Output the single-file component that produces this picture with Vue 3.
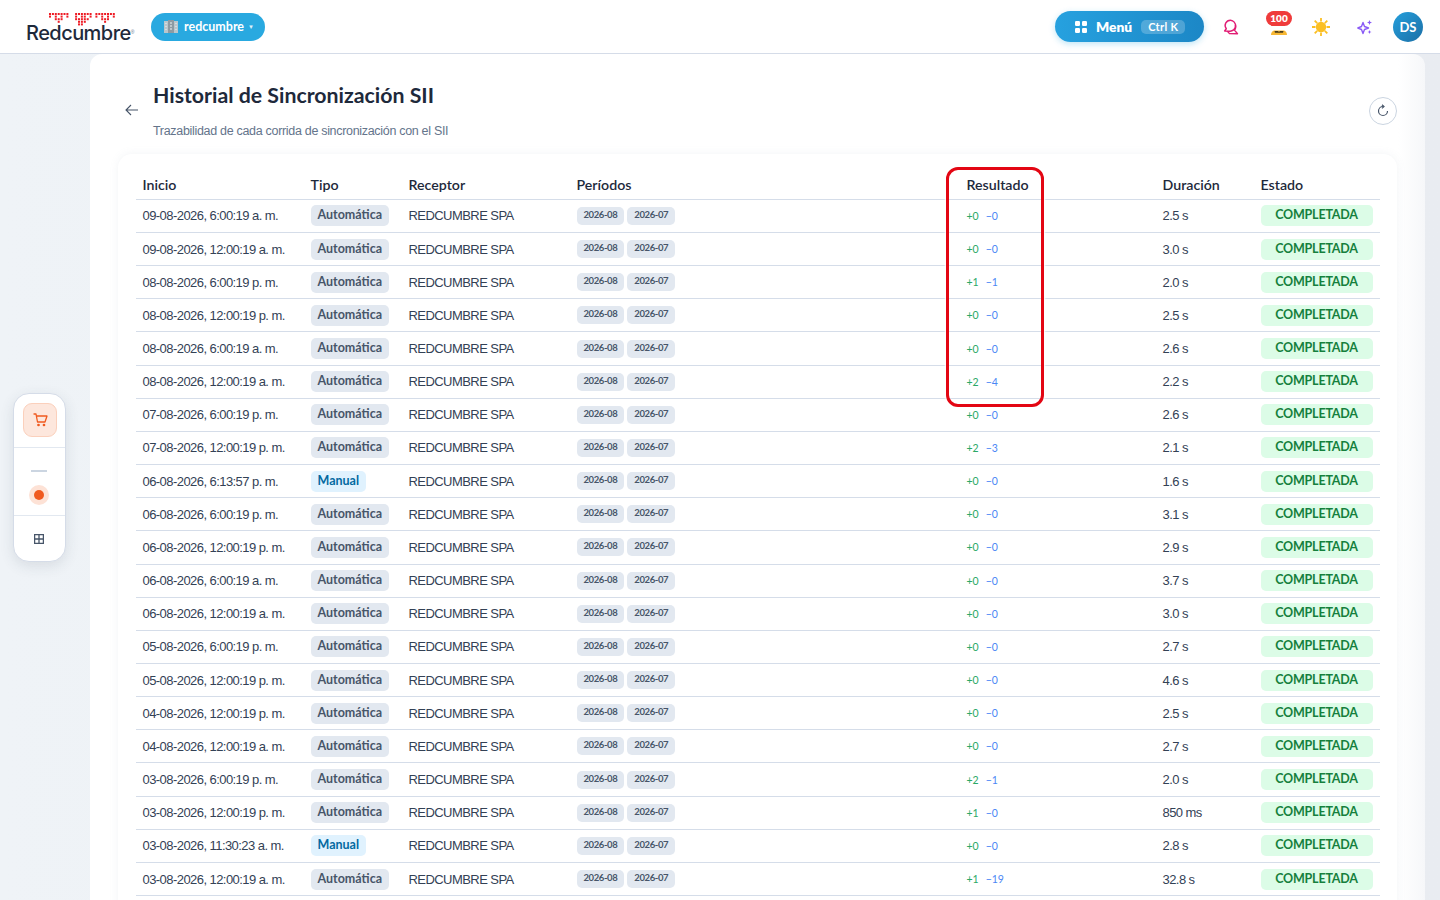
<template>
  <div class="page">
    <header class="topbar">
      <div class="brand">
        <svg class="brand-dots" width="68" height="14" viewBox="0 0 68 14">
          <g fill="#ee1c25">
            <rect v-for="d in logoDots" :key="d.x + '-' + d.y" :x="d.x" :y="d.y" width="2" height="2" />
          </g>
        </svg>
        <span class="brand-name">Redcumbre</span>
        <span class="brand-reg">®</span>
      </div>
      <button class="org">
        <svg width="14" height="13" viewBox="0 0 14 13">
          <rect y="1" width="14" height="12" fill="#b9c6cc" />
          <rect x="4" width="6" height="13" fill="#8d9ba3" />
          <path d="M2 3v1M2 6v1M2 9v1M12 3v1M12 6v1M12 9v1M6 3h2M6 6h2M6 9h2" stroke="#eef3f5" stroke-width="1" />
        </svg>
        <span>redcumbre</span>
        <i class="caret">▼</i>
      </button>
      <div class="top-right">
        <button class="menu">
          <svg width="12" height="12" viewBox="0 0 12 12" fill="#fff">
            <rect width="5" height="5" rx="1.2" />
            <rect x="7" width="5" height="5" rx="1.2" />
            <rect y="7" width="5" height="5" rx="1.2" />
            <rect x="7" y="7" width="5" height="5" rx="1.2" />
          </svg>
          <span class="menu-label">Menú</span>
          <span class="menu-key">Ctrl K</span>
        </button>
        <svg class="top-icon chat" width="16" height="16" viewBox="0 0 16 16" fill="none" stroke="#e11d74" stroke-width="1.400" stroke-linejoin="round">
          <path d="M7.500 1.200a5.300 5.300 0 0 0-4.200 8.600L1.600 12l5 .2a5.300 5.300 0 0 0 .9-11z" />
          <path d="M12.400 5.800c.6 2 .4 3.900-.9 5.300l3 3.700-8-.2-2.100-2.400" />
        </svg>
        <div class="streak">
          <span class="streak-count">100</span>
          <svg width="16" height="6" viewBox="0 0 16 6">
            <path d="M0 6c0-2.500 1.500-4 3-4.500h10c1.500.5 3 2 3 4.500z" fill="#f7b733" />
            <path d="M3.500 2h3.500l1 1 1-1h3.500l-.5 1.800H4z" fill="#4a3c1c" />
          </svg>
        </div>
        <svg class="top-icon sun" width="18" height="18" viewBox="0 0 18 18">
          <circle cx="9" cy="9" r="5.200" fill="#fbbf24" />
          <path d="M9 0v3.500M9 14.500V18M0 9h3.500M14.500 9H18M2.700 2.700l2.500 2.500M12.800 12.800l2.500 2.500M2.700 15.300l2.500-2.500M12.800 5.200l2.500-2.500" stroke="#fbbf24" stroke-width="1.800" />
        </svg>
        <svg class="top-icon spark" width="16" height="16" viewBox="0 0 16 16">
          <path d="M6 3.500l1.500 4L11.500 9l-4 1.500L6 14.500l-1.500-4L.8 9l3.700-1.500z" fill="none" stroke="#8b5cf6" stroke-width="1.400" stroke-linejoin="round" />
          <path d="M12.500 1l.7 1.800 1.800.7-1.800.7-.7 1.800-.7-1.800L10 3.500l1.800-.7zM12.500 11l.6 1.400 1.400.6-1.400.6-.6 1.400-.6-1.400-1.400-.6 1.400-.6z" fill="#8b5cf6" />
        </svg>
        <div class="avatar">DS</div>
      </div>
    </header>

    <div class="body">
      <aside class="dock">
        <div class="dock-top">
          <button class="dock-cart">
            <svg width="15" height="14" viewBox="0 0 15 14" fill="none" stroke="#f0591e" stroke-width="1.300" stroke-linecap="round" stroke-linejoin="round">
              <path d="M1 1h2l1.500 8h7.500L14 3H3.400" />
              <circle cx="5.500" cy="12" r=".7" fill="#f0591e" />
              <circle cx="11" cy="12" r=".7" fill="#f0591e" />
            </svg>
          </button>
        </div>
        <div class="dock-mid">
          <span class="dock-dash"></span>
          <span class="dock-dot"></span>
        </div>
        <div class="dock-bottom">
          <svg width="10" height="10" viewBox="0 0 10 10" fill="none" stroke="#475569" stroke-width="1.300">
            <rect x=".6" y=".6" width="8.800" height="8.800" />
            <path d="M5 .6v8.800M.6 5h8.800" />
          </svg>
        </div>
      </aside>

      <main class="sheet">
        <div class="head">
          <button class="back">
            <svg width="14" height="12" viewBox="0 0 14 12" fill="none" stroke="#475569" stroke-width="1.100">
              <path d="M13 6H1M6 1 1 6l5 5" />
            </svg>
          </button>
          <div class="head-text">
            <h1>Historial de Sincronización SII</h1>
            <p>Trazabilidad de cada corrida de sincronización con el SII</p>
          </div>
          <button class="refresh">
            <svg width="14" height="14" viewBox="0 0 14 14" fill="none" stroke="#475569" stroke-width="1.200">
              <path d="M7 2.500a4.500 4.500 0 1 0 4.500 4.500" />
              <path d="M6 .8l2 1.800-2 1.800" />
            </svg>
          </button>
        </div>

        <section class="card">
          <div class="highlight"></div>
          <div class="row row-head">
            <div>Inicio</div>
            <div>Tipo</div>
            <div>Receptor</div>
            <div>Períodos</div>
            <div>Resultado</div>
            <div>Duración</div>
            <div>Estado</div>
          </div>
          <div v-for="r in rows" :key="r.start" class="row">
            <div>{{ r.start }}</div>
            <div><span class="chip" :class="r.manual ? 'chip-manual' : 'chip-auto'">{{ r.manual ? "Manual" : "Automática" }}</span></div>
            <div>REDCUMBRE SPA</div>
            <div class="periods">
              <span class="period">2026-08</span>
              <span class="period">2026-07</span>
            </div>
            <div class="result">
              <span class="plus">+{{ r.add }}</span>
              <span class="minus">−{{ r.del }}</span>
            </div>
            <div>{{ r.time }}</div>
            <div><span class="status">COMPLETADA</span></div>
          </div>
        </section>
      </main>
    </div>
  </div>
</template>

<script setup>
const rawRows = [
  ["09-08-2026, 6:00:19 a. m.", 0, 0, "2.5 s"],
  ["09-08-2026, 12:00:19 a. m.", 0, 0, "3.0 s"],
  ["08-08-2026, 6:00:19 p. m.", 1, 1, "2.0 s"],
  ["08-08-2026, 12:00:19 p. m.", 0, 0, "2.5 s"],
  ["08-08-2026, 6:00:19 a. m.", 0, 0, "2.6 s"],
  ["08-08-2026, 12:00:19 a. m.", 2, 4, "2.2 s"],
  ["07-08-2026, 6:00:19 p. m.", 0, 0, "2.6 s"],
  ["07-08-2026, 12:00:19 p. m.", 2, 3, "2.1 s"],
  ["06-08-2026, 6:13:57 p. m.", 0, 0, "1.6 s", true],
  ["06-08-2026, 6:00:19 p. m.", 0, 0, "3.1 s"],
  ["06-08-2026, 12:00:19 p. m.", 0, 0, "2.9 s"],
  ["06-08-2026, 6:00:19 a. m.", 0, 0, "3.7 s"],
  ["06-08-2026, 12:00:19 a. m.", 0, 0, "3.0 s"],
  ["05-08-2026, 6:00:19 p. m.", 0, 0, "2.7 s"],
  ["05-08-2026, 12:00:19 p. m.", 0, 0, "4.6 s"],
  ["04-08-2026, 12:00:19 p. m.", 0, 0, "2.5 s"],
  ["04-08-2026, 12:00:19 a. m.", 0, 0, "2.7 s"],
  ["03-08-2026, 6:00:19 p. m.", 2, 1, "2.0 s"],
  ["03-08-2026, 12:00:19 p. m.", 1, 0, "850 ms"],
  ["03-08-2026, 11:30:23 a. m.", 0, 0, "2.8 s", true],
  ["03-08-2026, 12:00:19 a. m.", 1, 19, "32.8 s"],
];

const rows = rawRows.map(([start, add, del, time, manual]) => ({ start, add, del, time, manual }));

// red dot matrix above the wordmark
const dotRows = [
  "#######..######.#######",
  "#.#.#.#..#.##.#.#.#.#.#",
  "..###....#####....###..",
  "...#......###......#...",
  "..........##...........",
];
const logoDots = dotRows.flatMap((line, y) =>
  [...line].flatMap((c, x) => (c === "#" ? [{ x: x * 2.9, y: y * 2.6 }] : []))
);
</script>

<style>
html,
body {
  margin: 0;
  background: #f1f4f8;
}
</style>

<style scoped>
.page {
  height: 900px;
  overflow: hidden;
  font-family: "Liberation Sans", Arial, sans-serif;
  color: #334155;
  display: flex;
  flex-direction: column;
}

button {
  border: 0;
  padding: 0;
  background: none;
  font: inherit;
  cursor: pointer;
}

.topbar {
  height: 53px;
  flex: none;
  display: flex;
  align-items: center;
  background: #fff;
  border-bottom: 1px solid #d5dce8;
  padding: 0 17px 0 26px;
}

.brand {
  width: 125px;
  height: 30px;
  position: relative;
  display: flex;
  align-items: flex-end;
}

.brand-dots {
  position: absolute;
  left: 23px;
  top: 1px;
}

.brand-name {
  font-family: Inter, sans-serif;
  font-size: 20px;
  font-weight: 500;
  line-height: 18px;
  letter-spacing: -0.55px;
  color: #1e293b;
}

.brand-reg {
  font-size: 5px;
  line-height: 14px;
  color: #64748b;
  margin-bottom: 3px;
}

.org {
  height: 28px;
  width: 114px;
  border-radius: 14px;
  background: #29a9e0;
  color: #fff;
  display: flex;
  align-items: center;
  padding-left: 13px;
  gap: 6px;
  font-family: Lato, sans-serif;
  font-size: 12.500px;
  font-weight: 700;
}

.caret {
  font-style: normal;
  font-size: 6px;
  opacity: 0.85;
  margin-left: -2px;
}

.top-right {
  margin-left: auto;
  display: flex;
  align-items: center;
}

.menu {
  width: 149px;
  height: 31px;
  border-radius: 16px;
  background: linear-gradient(90deg, #26a1df, #1c87c6);
  box-shadow: 0 2px 6px rgba(41, 169, 224, 0.3);
  color: #fff;
  display: flex;
  align-items: center;
  padding-left: 20px;
  font-family: Lato, sans-serif;
}

.menu-label {
  font-size: 13.800px;
  font-weight: 800;
  margin-left: 9px;
}

.menu-key {
  margin-left: 9px;
  padding: 0 7px;
  height: 14px;
  line-height: 14px;
  border-radius: 5px;
  background: rgba(255, 255, 255, 0.22);
  font-size: 11px;
  font-weight: 700;
  letter-spacing: 0.3px;
}

.top-icon {
  flex: none;
}

.chat {
  margin-left: 19px;
}

.streak {
  margin-left: 27px;
  margin-bottom: 7px;
  width: 26px;
  display: flex;
  flex-direction: column;
  align-items: center;
  gap: 3px;
}

.streak-count {
  width: 26px;
  height: 15px;
  line-height: 15px;
  border-radius: 8px;
  background: #ef3b3b;
  color: #fff;
  text-align: center;
  font-family: Lato, sans-serif;
  font-size: 10px;
  font-weight: 800;
}

.sun {
  margin-left: 20px;
}

.spark {
  margin-left: 27px;
}

.avatar {
  margin-left: 20px;
  width: 30px;
  height: 30px;
  border-radius: 50%;
  background: linear-gradient(135deg, #259fdc, #1c6fa6);
  color: #fff;
  font-family: Lato, sans-serif;
  font-size: 13px;
  font-weight: 700;
  display: flex;
  align-items: center;
  justify-content: center;
}

.body {
  flex: 1;
  min-height: 0;
  position: relative;
  padding: 0 15px 0 90px;
  background: linear-gradient(90deg, #eff3f7, #e9ecf1);
}

.dock {
  position: absolute;
  left: 12.500px;
  top: 339px;
  width: 51px;
  height: 167px;
  background: #fff;
  border: 1px solid #d5dce8;
  border-radius: 16px;
  box-shadow: 0 4px 14px rgba(51, 65, 85, 0.12);
  display: flex;
  flex-direction: column;
  align-items: center;
}

.dock-top {
  height: 54px;
  width: 100%;
  flex: none;
  display: flex;
  justify-content: center;
  padding: 9px 0 0 2px;
  box-sizing: border-box;
  border-bottom: 1px solid #e2e8f0;
}

.dock-cart {
  width: 34px;
  height: 34px;
  border-radius: 9px;
  background: #fde7dd;
  border: 1px solid #fbd0bc;
  box-sizing: border-box;
  display: flex;
  align-items: center;
  justify-content: center;
}

.dock-mid {
  height: 68px;
  width: 100%;
  flex: none;
  box-sizing: border-box;
  border-bottom: 1px solid #e2e8f0;
  display: flex;
  flex-direction: column;
  align-items: center;
  padding-top: 22px;
}

.dock-dash {
  width: 16px;
  height: 2px;
  background: #cbd5e1;
}

.dock-dot {
  margin-top: 18px;
  width: 10px;
  height: 10px;
  border-radius: 50%;
  background: #f0591e;
  box-shadow: 0 0 0 5px #fde2d6;
}

.dock-bottom {
  flex: 1;
  display: flex;
  align-items: center;
  justify-content: center;
}

.sheet {
  height: 100%;
  background: linear-gradient(90deg, #fff 98%, #f6f7f9);
  border-radius: 12px 12px 0 0;
  padding: 0 28px 0 28px;
  overflow: hidden;
}

.head {
  height: 100px;
  display: flex;
  align-items: flex-start;
  position: relative;
}

.back {
  margin: 50px 0 0 7px;
  width: 14px;
  height: 12px;
  display: flex;
}

.head-text {
  margin-left: 14px;
  padding-top: 27px;
}

h1 {
  margin: 0;
  font-family: Lato, sans-serif;
  font-size: 21.300px;
  line-height: 28px;
  font-weight: 700;
  color: #1e293b;
}

.head-text p {
  margin: 14px 0 0;
  font-size: 12.500px;
  line-height: 16px;
  letter-spacing: -0.31px;
  color: #64748b;
}

.refresh {
  margin: 43px 0 0 auto;
  width: 28px;
  height: 28px;
  border: 1px solid #cbd5e1;
  border-radius: 50%;
  display: flex;
  align-items: center;
  justify-content: center;
  box-sizing: border-box;
}

.card {
  position: relative;
  background: #fff;
  border-radius: 14px;
  box-shadow: 0 0 8px rgba(148, 163, 184, 0.12);
  padding: 12px 17px 0 18px;
  height: 760px;
}

/* review marker drawn over the Resultado column */
.highlight {
  position: absolute;
  left: 828px;
  top: 13px;
  width: 98px;
  height: 240px;
  box-sizing: border-box;
  border: 3px solid #e30613;
  border-radius: 12px;
  z-index: 2;
  box-shadow: 0 0 2px 1px #fff;
}

.row {
  display: grid;
  grid-template-columns: 168px 98px 168px 390px 196px 98px 126px;
  height: 33.170px;
  box-sizing: border-box;
  border-bottom: 1px solid #d5dde9;
  align-items: center;
  font-size: 13px;
  letter-spacing: -0.56px;
  color: #334155;
}

.row > div {
  padding-left: 6.500px;
}

.row-head {
  height: 33.800px;
  padding-top: 4px;
  font-family: Lato, sans-serif;
  font-size: 14.200px;
  font-weight: 600;
  letter-spacing: 0;
  color: #1e293b;
}

.chip {
  display: inline-block;
  height: 21px;
  line-height: 19px;
  padding: 0 7px;
  border-radius: 5px;
  font-family: Lato, sans-serif;
  font-size: 12.500px;
  font-weight: 700;
  letter-spacing: 0;
}

.chip-auto {
  background: #e2e8f0;
  color: #475569;
}

.chip-manual {
  background: #e0f2fe;
  color: #0369a1;
}

.periods {
  display: flex;
  gap: 3px;
}

.period {
  height: 18px;
  line-height: 16px;
  padding: 0 7px;
  border-radius: 5px;
  background: #e2e8f0;
  color: #475569;
  font-family: Lato, sans-serif;
  font-size: 9.500px;
  font-weight: 700;
  letter-spacing: -0.4px;
}

.result {
  display: flex;
  gap: 7px;
  font-family: Lato, sans-serif;
  font-size: 10.500px;
  letter-spacing: 0;
}

.plus {
  color: #2ba866;
}

.minus {
  color: #4b87f5;
}

.status {
  display: block;
  width: 112px;
  height: 21px;
  line-height: 19px;
  text-align: center;
  border-radius: 5px;
  background: #dcfce7;
  color: #15803d;
  font-family: Lato, sans-serif;
  font-size: 12.500px;
  font-weight: 700;
  letter-spacing: -0.2px;
}
</style>
